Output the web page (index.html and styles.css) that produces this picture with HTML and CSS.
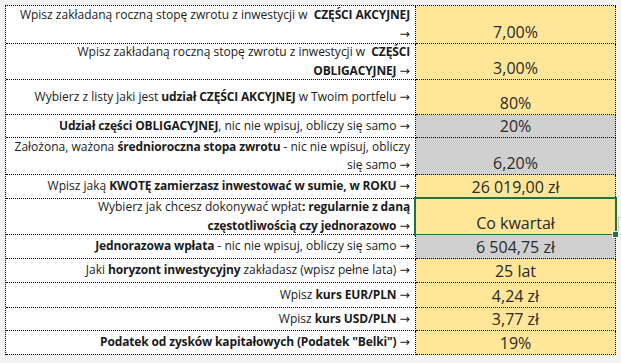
FILE: index.html
```html
<!DOCTYPE html>
<html lang="pl">
<head>
<meta charset="utf-8">
<link rel="stylesheet" href="styles.css">
</head>
<body>
<div class="sheet">
  <div class="label"><span>Wpisz zakładaną roczną stopę zwrotu z inwestycji w&nbsp; <b>CZĘŚCI AKCYJNEJ</b><br><i class="arr">→</i></span></div>
  <div class="val yellow">7,00%</div>

  <div class="label"><span>Wpisz zakładaną roczną stopę zwrotu z inwestycji w&nbsp; <b>CZĘŚCI</b><br><b>OBLIGACYJNEJ</b> <i class="arr">→</i></span></div>
  <div class="val yellow">3,00%</div>

  <div class="label"><span>Wybierz z listy jaki jest <b>udział CZĘŚCI AKCYJNEJ</b> w Twoim portfelu <i class="arr">→</i></span></div>
  <div class="val yellow">80%</div>

  <div class="label"><span><b>Udział części OBLIGACYJNEJ</b>, nic nie wpisuj, obliczy się samo <i class="arr">→</i></span></div>
  <div class="val gray">20%</div>

  <div class="label"><span>Założona, ważona <b>średnioroczna stopa zwrotu</b> - nic nie wpisuj, obliczy<br>się samo <i class="arr">→</i></span></div>
  <div class="val gray">6,20%</div>

  <div class="label"><span>Wpisz jaką <b>KWOTĘ zamierzasz inwestować w sumie, w ROKU</b> <i class="arr">→</i></span></div>
  <div class="val yellow">26 019,00 zł</div>

  <div class="label"><span>Wybierz jak chcesz dokonywać wpłat<b>:</b> <b>regularnie z daną</b><br><b>częstotliwością czy jednorazowo</b> <i class="arr">→</i></span></div>
  <div class="val yellow selected">Co kwartał<span class="handle"></span><span class="tab"></span></div>

  <div class="label"><span><b>Jednorazowa wpłata</b> - nic nie wpisuj, obliczy się samo <i class="arr">→</i></span></div>
  <div class="val gray">6 504,75 zł</div>

  <div class="label"><span>Jaki <b>horyzont inwestycyjny</b> zakładasz (wpisz pełne lata) <i class="arr">→</i></span></div>
  <div class="val yellow">25 lat</div>

  <div class="label"><span>Wpisz <b>kurs EUR/PLN</b> <i class="arr">→</i></span></div>
  <div class="val yellow">4,24 zł</div>

  <div class="label"><span>Wpisz <b>kurs USD/PLN</b> <i class="arr">→</i></span></div>
  <div class="val yellow">3,77 zł</div>

  <div class="label"><span><b>Podatek od zysków kapitałowych (Podatek "Belki")</b> <i class="arr">→</i></span></div>
  <div class="val yellow">19%</div>
</div>
</body>
</html>
```

FILE: styles.css
```css
html, body {
  margin: 0;
  padding: 0;
  background: #f3f3f3;
}
body {
  padding: 5px;
  font-family: "Open Sans", "Liberation Sans", sans-serif;
  color: #1b1b1b;
}
.sheet {
  display: grid;
  grid-template-columns: 410px 200px;
  grid-template-rows: 38px 36px 35px 23px 37px 24px 36px 24px 24px 25px 23px 24px;
  border-top: 1px dotted #000;
  border-left: 1px dotted #000;
  width: 610px;
}
.label, .val {
  border-right: 1px dotted #000;
  border-bottom: 1px dotted #000;
  box-sizing: border-box;
}
.label {
  background: #fff;
  font-size: 12px;
  line-height: 18.5px;
  text-align: right;
  padding-right: 5px;
  display: flex;
  flex-direction: column;
  justify-content: center;
  white-space: nowrap;
}
.label b {
  font-weight: 700;
  letter-spacing: -0.15px;
}
.arr {
  font-style: normal;
  font-family: "DejaVu Sans", sans-serif;
  font-size: 12.5px;
  line-height: 1;
}
.val {
  font-size: 16px;
  line-height: 22px;
  color: #2a2a2a;
  display: flex;
  align-items: flex-end;
  justify-content: center;
  position: relative;
}
.yellow { background: #ffe699; }
.gray { background: #d0d0d0; }
.selected::after {
  content: "";
  position: absolute;
  left: -2px;
  top: -2px;
  right: -2px;
  bottom: -2px;
  border: 2px solid #217346;
  pointer-events: none;
}
.handle {
  position: absolute;
  right: -4px;
  bottom: -4px;
  width: 5px;
  height: 5px;
  background: #217346;
  border: 1px solid #fff;
  z-index: 2;
}
.tab {
  position: absolute;
  right: -7px;
  top: 18px;
  width: 3px;
  height: 16px;
  background: #f7f7f7;
  border: 1px solid #c6c6c6;
  border-right: none;
}
```
